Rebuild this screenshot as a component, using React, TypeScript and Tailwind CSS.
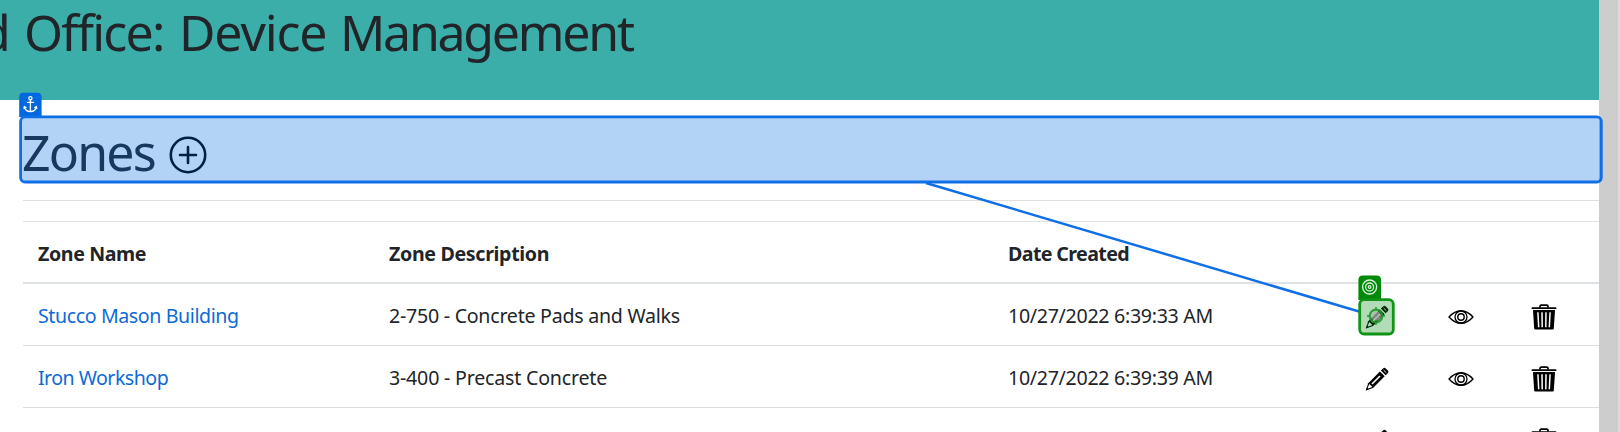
import React from "react";

const zones = [
  {
    name: "Stucco Mason Building",
    nameCls: "tracking-[-0.4px]",
    desc: "2-750 - Concrete Pads and Walks",
    descCls: "tracking-[-0.25px]",
    date: "10/27/2022 6:39:33 AM",
  },
  {
    name: "Iron Workshop",
    nameCls: "tracking-[-0.53px]",
    desc: "3-400 - Precast Concrete",
    descCls: "tracking-[-0.2px]",
    date: "10/27/2022 6:39:39 AM",
  },
  { name: "", nameCls: "", desc: "", descCls: "", date: "" },
];

const cols = "grid grid-cols-[351px_619px_343px_83px_83px_83px] items-center";

function Pencil() {
  return (
    <svg width="24" height="24" viewBox="0 0 24 24" className="mr-px block">
      <path d="M0.8 23.4 L3.2 16.2 L14.9 4.5 L19.7 9.3 L8 21 Z" fill="#000" />
      <path d="M2.4 21.8 L4.3 17 L7.4 20.1 Z" fill="#fff" />
      <path d="M0.8 23.4 L1.8 20.6 L3.6 22.4 Z" fill="#000" />
      <path d="M7 17 L15 9" stroke="#fff" strokeWidth="1.6" />
      <path d="M15.9 3.6 L18.3 1.2 Q19.4 0.3 20.5 1.2 L23 3.7 Q23.9 4.8 23 5.9 L20.6 8.3 Z" fill="#000" />
      <path d="M18.6 3 L21.3 5.7" stroke="#fff" strokeWidth="0.9" />
    </svg>
  );
}

function Eye() {
  return (
    <svg width="26" height="16" viewBox="0 0 26 16" className="block" fill="none" stroke="#000">
      <path d="M1 8 Q6.5 1.7 13 1.7 T25 8 Q19.5 14.3 13 14.3 T1 8 Z" strokeWidth="1.4" strokeLinejoin="round" />
      <circle cx="13" cy="8" r="6" strokeWidth="1.3" />
      <circle cx="13" cy="8" r="3.2" strokeWidth="1.4" />
    </svg>
  );
}

function Trash() {
  return (
    <svg width="26" height="26" viewBox="0 0 26 26" className="block">
      <path d="M9 3.4 V2.4 Q9 1.2 10.2 1.2 H15.8 Q17 1.2 17 2.4 V3.4" fill="none" stroke="#000" strokeWidth="1.7" />
      <rect x="0.6" y="3.3" width="24.8" height="1.7" rx="0.6" fill="#000" />
      <path d="M2 6 H24 L22.8 24.6 Q22.7 25.6 21.7 25.6 H4.3 Q3.3 25.6 3.2 24.6 Z" fill="#000" />
      <path d="M6.9 8.2 L7.7 23.2 M11 8.2 L11.2 23.2 M15 8.2 L14.8 23.2 M19.1 8.2 L18.3 23.2" stroke="#fff" strokeWidth="1.5" />
    </svg>
  );
}

function Annotations() {
  return (
    <svg className="pointer-events-none absolute inset-0" width="1620" height="432" viewBox="0 0 1620 432">
      <g>
        <path d="M19.2 117 V97 Q19.2 92.7 23.5 92.7 H37.3 Q41.6 92.7 41.6 97 V117 Z" fill="#0069e0" />
        <rect x="20.6" y="116.8" width="1580.7" height="65.2" rx="4.5" fill="#0069e0" fillOpacity="0.3" stroke="#0f6fe6" strokeWidth="2.8" />
        <g fill="none" stroke="#fff" strokeWidth="1.3" strokeLinecap="round" strokeLinejoin="round">
          <circle cx="30.4" cy="98.3" r="1.6" />
          <path d="M30.4 100 V111.2 M27.3 102.3 H33.5 M24.4 106.6 Q25 111.4 30.4 111.6 Q35.8 111.4 36.4 106.6 M24 108.4 L24.4 106.4 L26 107.6 M36.8 108.4 L36.4 106.4 L34.8 107.6" />
        </g>
      </g>
      <line x1="926" y1="183" x2="1359" y2="311.5" stroke="#0f6fe6" strokeWidth="2.5" />
      <g>
        <path d="M1358.4 300 V280 Q1358.4 275.6 1362.8 275.6 H1376.6 Q1381 275.6 1381 280 V300 Z" fill="#008a09" />
        <rect x="1359.7" y="299.6" width="33.6" height="34.4" rx="4.5" fill="#008a09" fillOpacity="0.3" stroke="#119318" strokeWidth="2.8" />
        <g fill="none" stroke="#d8f0da">
          <circle cx="1369.6" cy="287" r="7" strokeWidth="1.3" />
          <circle cx="1369.6" cy="287" r="4" strokeWidth="1.3" />
          <circle cx="1369.6" cy="287" r="1.3" strokeWidth="1.2" />
        </g>
        <circle cx="1376" cy="316" r="5" fill="#b0b0b0" fillOpacity="0.7" />
        <circle cx="1376" cy="316" r="6.3" fill="none" stroke="#1f9a2a" strokeOpacity="0.9" strokeWidth="2.2" />
        <path d="M1376 307 V310 M1376 322 V325 M1367 316 H1370 M1382 316 H1385" stroke="#1f9a2a" strokeOpacity="0.8" strokeWidth="1.8" />
      </g>
    </svg>
  );
}

export default function App() {
  return (
    <div className="relative flex h-[432px] w-[1620px] overflow-hidden bg-white font-['Noto_Sans',sans-serif] text-[19.6px] text-[#212529]">
      <div className="flex w-[1599px] shrink-0 flex-col">
        <header className="h-[100px] shrink-0 overflow-hidden bg-[#3caea9]">
          <h1 className="-ml-[20px] flex whitespace-nowrap text-[50px] leading-[65px]">
            <span className="w-[44px] shrink-0">d</span>
            <span className="w-[155px] shrink-0 tracking-[-1.75px]">Office:</span>
            <span className="w-[161px] shrink-0 tracking-[-1.15px]">Device</span>
            <span className="tracking-[-2.25px]">Management</span>
          </h1>
        </header>
        <main className="flex flex-col pl-[23px]">
          <div className="mt-[17px] flex h-[65px] items-center">
            <h2 className="-ml-px pt-[6px] whitespace-nowrap text-[50px] leading-[65px] tracking-[-1.8px]">Zones</h2>
            <svg className="mt-[11px] ml-[14px]" width="38" height="38" viewBox="0 0 38 38" fill="none" stroke="#000" strokeWidth="2.6">
              <circle cx="19" cy="19" r="17.2" />
              <path d="M19 11 V27 M11 19 H27" strokeLinecap="round" />
            </svg>
          </div>
          <div className="mt-[18px] h-px bg-[#dfdfdf]" />
          <section className="mt-5">
            <div className={`${cols} h-[63px] border-t border-b-2 border-[#dee2e6] pt-[4px] font-bold`}>
              <div className="pl-[15px] tracking-[-0.38px]">Zone Name</div>
              <div className="pl-[15px] tracking-[-0.33px]">Zone Description</div>
              <div className="pl-[15px] tracking-[-0.6px]">Date Created</div>
            </div>
            {zones.map((z, i) => (
              <div key={i} className={`${cols} h-[62px] border-b border-[#dcdfe2] whitespace-nowrap`}>
                <div className={`pt-[3px] pl-[15px] text-[#0d6ad8] ${z.nameCls}`}>{z.name}</div>
                <div className={`pt-[3px] pl-[15px] ${z.descCls}`}>{z.desc}</div>
                <div className="pt-[3px] pl-[15px] tracking-[-0.3px]">{z.date}</div>
                <div className="flex justify-center pt-[5px]"><Pencil /></div>
                <div className="flex justify-center pt-[5px]"><Eye /></div>
                <div className="flex justify-center pt-[5px]"><Trash /></div>
              </div>
            ))}
          </section>
        </main>
      </div>
      <div className="h-full w-[21px] border-r-2 border-[#dcdcdc] bg-[#cdcdcd]" />
      <Annotations />
    </div>
  );
}
